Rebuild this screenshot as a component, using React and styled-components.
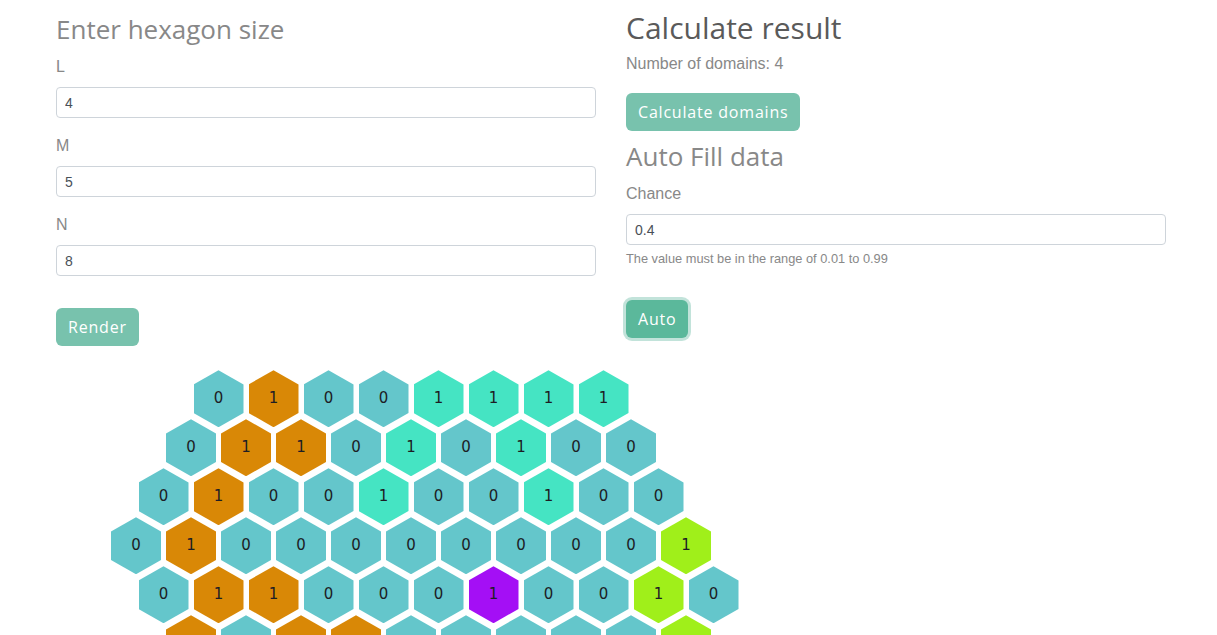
import React from "react";
import styled, { createGlobalStyle } from "styled-components";

const GlobalStyle = createGlobalStyle`
  html, body {
    margin: 0;
    padding: 0;
    background: #fff;
    overflow: hidden;
  }
  body {
    font-family: "Liberation Sans", Arial, sans-serif;
    font-size: 16px;
    line-height: 1.5;
    color: #888;
  }
`;

const HEADING_FONT = `"Open Sans", "Liberation Sans", sans-serif`;

const Container = styled.div`
  width: 1110px;
  margin-left: 56px;
`;

const Columns = styled.div`
  display: grid;
  grid-template-columns: 540px 540px;
  column-gap: 30px;
`;

const Column = styled.div`
  display: flex;
  flex-direction: column;
  align-items: flex-start;
`;

const Heading = styled.h2`
  font-family: ${HEADING_FONT};
  font-weight: 400;
  line-height: 1.2;
  margin: ${(p) => p.$margin || "0"};
  font-size: ${(p) => p.$size || "24px"};
  color: ${(p) => p.$color || "#888"};
`;

const Label = styled.label`
  display: block;
  font-size: 16px;
  line-height: 24px;
  margin-bottom: 8px;
  color: #888;
`;

const FieldGroup = styled.div`
  width: 100%;
  margin-bottom: ${(p) => p.$gap || "16px"};
`;

const Input = styled.input`
  box-sizing: border-box;
  display: block;
  width: 100%;
  height: 31px;
  padding: 0 8px;
  font-family: "Liberation Sans", Arial, sans-serif;
  font-size: 14px;
  color: #495057;
  background: #fff;
  border: 1px solid #ced4da;
  border-radius: 4px;
  outline: none;
`;

const HelpText = styled.small`
  display: block;
  margin-top: 4px;
  font-size: 12.8px;
  line-height: 19px;
  color: #888;
`;

const Text = styled.p`
  margin: 0;
  font-size: 16px;
  line-height: 24px;
  color: #888;
`;

const Button = styled.button`
  box-sizing: border-box;
  height: 38px;
  padding: 0 12px;
  margin-top: ${(p) => p.$top || "0"};
  font-family: ${HEADING_FONT};
  font-size: 16px;
  letter-spacing: 0.8px;
  color: #fff;
  border: none;
  border-radius: 6px;
  cursor: pointer;
  background: ${(p) => (p.$focused ? "#5bb89b" : "#78c2ad")};
  box-shadow: ${(p) => (p.$focused ? "0 0 0 3px rgba(120, 194, 173, 0.45)" : "none")};
`;

const Board = styled.div`
  margin-top: 24px;
  margin-left: 55px;
  display: flex;
  flex-direction: column;
`;

const HexRow = styled.div`
  display: flex;
  gap: 5px;
  padding-left: ${(p) => p.$shift * 27.5}px;
  & + & {
    margin-top: -8px;
  }
`;

const COLORS = {
  t: "#64c6cb",
  o: "#d98806",
  m: "#45e4c3",
  l: "#a0ef1a",
  p: "#a40ff5",
};

const Hex = styled.div`
  flex: 0 0 50px;
  width: 50px;
  height: 57px;
  display: flex;
  align-items: center;
  justify-content: center;
  clip-path: polygon(50% 0, 100% 25%, 100% 75%, 50% 100%, 0 75%, 0 25%);
  background: ${(p) => COLORS[p.$kind]};
  font-family: "DejaVu Sans", sans-serif;
  font-size: 15px;
  color: #1d1d24;
`;

// t = empty cell (0), other letters = domain colour of a filled cell (1)
const rows = [
  { shift: 3, cells: "tottmmmm" },
  { shift: 2, cells: "tootmtmtt" },
  { shift: 1, cells: "tottmttmtt" },
  { shift: 0, cells: "tottttttttl" },
  { shift: 1, cells: "tootttpttlt" },
  { shift: 2, cells: "otootttttl" },
];

const HexBoard = () => (
  <Board>
    {rows.map((row, i) => (
      <HexRow key={i} $shift={row.shift}>
        {row.cells.split("").map((kind, j) => (
          <Hex key={j} $kind={kind}>
            {kind === "t" ? 0 : 1}
          </Hex>
        ))}
      </HexRow>
    ))}
  </Board>
);

export default function App() {
  return (
    <>
      <GlobalStyle />
      <Container>
        <Columns>
          <Column>
            <Heading $size="26px" $margin="14px 0 10px">
              Enter hexagon size
            </Heading>
            <FieldGroup>
              <Label>L</Label>
              <Input defaultValue="4" />
            </FieldGroup>
            <FieldGroup>
              <Label>M</Label>
              <Input defaultValue="5" />
            </FieldGroup>
            <FieldGroup $gap="0">
              <Label>N</Label>
              <Input defaultValue="8" />
            </FieldGroup>
            <Button $top="32px">Render</Button>
          </Column>
          <Column>
            <Heading $size="30px" $color="#5a5a5a" $margin="10px 0 6px">
              Calculate result
            </Heading>
            <Text>Number of domains: 4</Text>
            <Button $top="17px">Calculate domains</Button>
            <Heading $size="26px" $margin="10px 0 10px">
              Auto Fill data
            </Heading>
            <FieldGroup $gap="0">
              <Label>Chance</Label>
              <Input defaultValue="0.4" />
              <HelpText>The value must be in the range of 0.01 to 0.99</HelpText>
            </FieldGroup>
            <Button $top="32px" $focused>
              Auto
            </Button>
          </Column>
        </Columns>
        <HexBoard />
      </Container>
    </>
  );
}
